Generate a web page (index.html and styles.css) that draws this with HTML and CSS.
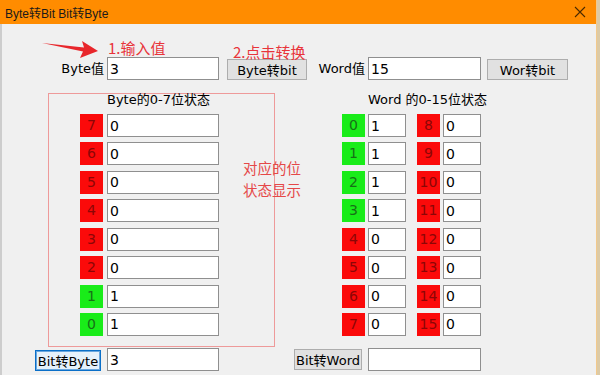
FILE: index.html
```html
<!DOCTYPE html>
<html>
<head>
<meta charset="utf-8">
<link rel="stylesheet" href="styles.css">
</head>
<body>
<div class="window">
  <div class="titlebar">
    <span class="title">Byte转Bit Bit转Byte</span>
    <svg class="close" width="12" height="12" viewBox="0 0 12 12"><path d="M1 1 L11 11 M11 1 L1 11" stroke="#4a2a00" stroke-width="1.1" fill="none"/></svg>
  </div>
  <div class="client">
    <div class="toprow">
      <span class="lbl lbl-byte">Byte值</span>
      <input class="field f-wide" type="text" value="3">
      <button class="btn b-byte2bit">Byte转bit</button>
      <span class="lbl lbl-word">Word值</span>
      <input class="field f-wide2" type="text" value="15">
      <button class="btn b-wor2bit">Wor转bit</button>
    </div>
    <div class="main">
      <div class="bytebox">
        <div class="head head-byte">Byte的0-7位状态</div>
        <div class="bytegrid">
          <span class="bit red">7</span><input class="field f-wide" type="text" value="0">
          <span class="bit red">6</span><input class="field f-wide" type="text" value="0">
          <span class="bit red">5</span><input class="field f-wide" type="text" value="0">
          <span class="bit red">4</span><input class="field f-wide" type="text" value="0">
          <span class="bit red">3</span><input class="field f-wide" type="text" value="0">
          <span class="bit red">2</span><input class="field f-wide" type="text" value="0">
          <span class="bit green">1</span><input class="field f-wide" type="text" value="1">
          <span class="bit green">0</span><input class="field f-wide" type="text" value="1">
        </div>
      </div>
      <div class="wordcol">
        <div class="head head-word">Word 的0-15位状态</div>
        <div class="wordgrid">
          <span class="bit green">0</span><input class="field f-small" type="text" value="1"><span class="bit red c2">8</span><input class="field f-small" type="text" value="0">
          <span class="bit green">1</span><input class="field f-small" type="text" value="1"><span class="bit red c2">9</span><input class="field f-small" type="text" value="0">
          <span class="bit green">2</span><input class="field f-small" type="text" value="1"><span class="bit red c2">10</span><input class="field f-small" type="text" value="0">
          <span class="bit green">3</span><input class="field f-small" type="text" value="1"><span class="bit red c2">11</span><input class="field f-small" type="text" value="0">
          <span class="bit red">4</span><input class="field f-small" type="text" value="0"><span class="bit red c2">12</span><input class="field f-small" type="text" value="0">
          <span class="bit red">5</span><input class="field f-small" type="text" value="0"><span class="bit red c2">13</span><input class="field f-small" type="text" value="0">
          <span class="bit red">6</span><input class="field f-small" type="text" value="0"><span class="bit red c2">14</span><input class="field f-small" type="text" value="0">
          <span class="bit red">7</span><input class="field f-small" type="text" value="0"><span class="bit red c2">15</span><input class="field f-small" type="text" value="0">
        </div>
      </div>
    </div>
    <div class="bottomrow">
      <button class="btn btn-default b-bit2byte">Bit转Byte</button>
      <input class="field f-wide" type="text" value="3">
      <button class="btn b-bit2word">Bit转Word</button>
      <input class="field f-wide2" type="text" value="">
    </div>
  </div>

  <svg class="arrow" width="600" height="70" viewBox="0 0 600 70">
    <polygon points="42,43 84,47.5 82,41 98,51 80,58 83,51.5" fill="#e8262b"/>
  </svg>
  <div class="note note1">1.输入值</div>
  <div class="note note2">2.点击转换</div>
  <div class="note note3">对应的位<br>状态显示</div>
</div>
</body>
</html>
```

FILE: styles.css
```css
html, body {
  margin: 0;
  padding: 0;
}
body {
  width: 600px;
  height: 375px;
  overflow: hidden;
  background: #dccaa6;
  font-family: "DejaVu Sans", "Noto Sans CJK SC", sans-serif;
  font-size: 13px;
  color: #000;
}
.window {
  position: relative;
  width: 596px;
  height: 375px;
  border-right: 1px solid #f2c98c;
  display: flex;
  flex-direction: column;
  background: #f0f0f0;
}
.titlebar {
  height: 24px;
  flex: none;
  background: #ff8c00;
  display: flex;
  align-items: center;
  justify-content: space-between;
  padding: 0 10px 0 5px;
}
.title {
  font-family: "Liberation Sans", "Noto Sans CJK SC", sans-serif;
  font-size: 12px;
  color: #1a1a1a;
}
.close {
  display: block;
}
.client {
  flex: 1;
  border-left: 2px solid #cdcdcd;
  display: flex;
  flex-direction: column;
}
.field {
  box-sizing: border-box;
  height: 23px;
  margin: 0;
  border: 1px solid #8f8f8f;
  background: #fff;
  padding: 0 0 0 2px;
  font-family: "DejaVu Sans", sans-serif;
  font-size: 14px;
  color: #000;
  outline: none;
}
.f-wide { width: 112px; }
.f-wide2 { width: 113px; }
.f-small { width: 38px; }
.btn {
  box-sizing: border-box;
  height: 21px;
  margin: 0;
  padding: 0;
  border: 1px solid #adadad;
  background: #e1e1e1;
  font-family: "DejaVu Sans", "Noto Sans CJK SC", sans-serif;
  font-size: 13px;
  color: #000;
  align-self: flex-end;
}
.btn-default {
  border: 1px solid #0a6fc8;
  box-shadow: inset 0 0 0 1px #6aa7de;
  background: #e5f1fb;
}
.toprow {
  display: flex;
  align-items: center;
  height: 23px;
  margin-top: 33px;
}
.lbl {
  text-align: right;
  margin-right: 3px;
  line-height: 23px;
}
.lbl-byte { width: 102px; }
.b-byte2bit { width: 80px; margin-left: 8px; }
.lbl-word { width: 55px; margin-left: 3px; }
.b-wor2bit { width: 81px; margin-left: 6px; }
.main {
  display: flex;
  margin-top: 13px;
  height: 254px;
}
.bytebox {
  box-sizing: border-box;
  width: 227px;
  height: 254px;
  margin-left: 46px;
  border: 1px solid #ee9a9a;
}
.head {
  line-height: 14px;
  margin-top: -1px;
  white-space: nowrap;
}
.head-byte { padding-left: 58px; }
.head-word { padding-left: 26px; }
.bytegrid {
  display: grid;
  grid-template-columns: 23px 112px;
  column-gap: 4px;
  row-gap: 5.43px;
  grid-auto-rows: 23px;
  margin-top: 7px;
  padding-left: 31px;
}
.wordcol {
  margin-left: 67px;
  padding-top: 1px;
}
.wordgrid {
  display: grid;
  grid-template-columns: 23px 38px 31px 38px;
  column-gap: 3px;
  row-gap: 5.43px;
  grid-auto-rows: 23px;
  margin-top: 7px;
}
.c2 {
  margin-left: 8px;
}
.bit {
  display: block;
  height: 23px;
  line-height: 23px;
  text-align: center;
  font-size: 14px;
  font-family: "DejaVu Sans", sans-serif;
}
.red {
  background: #fb0a0a;
  color: #8c0606;
}
.green {
  background: #19ec19;
  color: #177017;
}
.bottomrow {
  display: flex;
  align-items: center;
  height: 23px;
  margin-top: 1px;
}
.b-bit2byte { width: 66px; margin-left: 33px; margin-right: 6px; }
.b-bit2word { width: 68px; margin-left: 75px; margin-right: 6px; align-self: center; }
.arrow {
  position: absolute;
  left: 0;
  top: 0;
  pointer-events: none;
}
.note {
  position: absolute;
  font-family: "Noto Sans CJK SC", sans-serif;
  font-size: 15px;
  line-height: 18px;
  color: #e8343a;
  white-space: nowrap;
}
.note1 { left: 108px; top: 39px; }
.note2 { left: 233px; top: 43px; }
.note3 {
  left: 243px;
  top: 157px;
  font-size: 14.5px;
  line-height: 22px;
  color: #e54848;
}
```
